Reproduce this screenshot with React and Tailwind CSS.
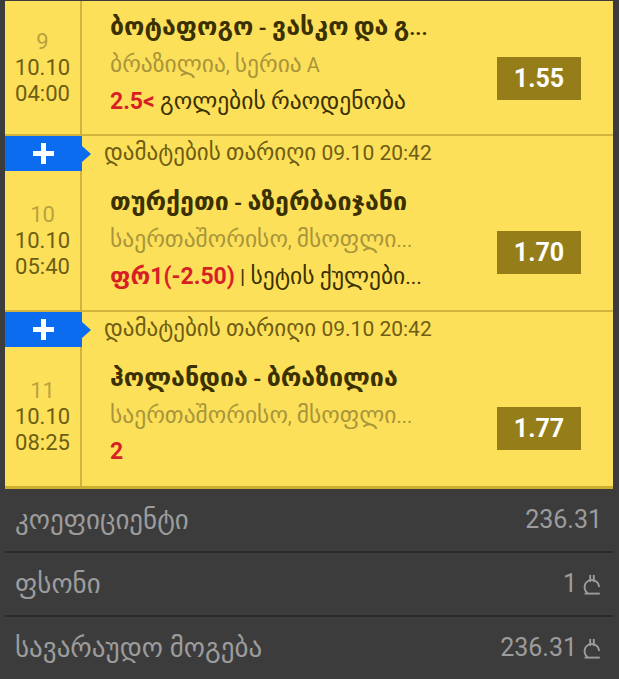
import React from "react";

const BETS = [
  {
    id: 9,
    date: "10.10",
    time: "04:00",
    title: "ბოტაფოგო - ვასკო და გ...",
    league: "ბრაზილია, სერია A",
    pick: "2.5<",
    market: "გოლების რაოდენობა",
    odd: "1.55",
  },
  {
    id: 10,
    date: "10.10",
    time: "05:40",
    title: "თურქეთი - აზერბაიჯანი",
    league: "საერთაშორისო, მსოფლი...",
    pick: "ფრ1(-2.50)",
    market: "| სეტის ქულები...",
    odd: "1.70",
    added: "09.10 20:42",
  },
  {
    id: 11,
    date: "10.10",
    time: "08:25",
    title: "ჰოლანდია - ბრაზილია",
    league: "საერთაშორისო, მსოფლი...",
    pick: "2",
    market: "",
    odd: "1.77",
    added: "09.10 20:42",
  },
];

// georgian glyphs come out of the fallback font a bit small, bump them
const Geo = ({ text, className }) =>
  text.split(/([\u10A0-\u10FF]+)/).map((part, i) =>
    /[\u10A0-\u10FF]/.test(part) ? (
      <span key={i} className={className}>
        {part}
      </span>
    ) : (
      part
    )
  );

const Lari = () => (
  <svg
    className="ml-[5px] inline-block"
    width="20"
    height="21"
    viewBox="0 0 20 21"
    fill="none"
    stroke="#9c9c9c"
    strokeWidth="1.9"
  >
    <path d="M17 13 A7.2 7.2 0 1 0 5.6 19" />
    <path d="M2.6 19.6 H17.8" />
    <path d="M8.2 1 V8 M11.8 1 V8" />
  </svg>
);

const AddedBanner = ({ added }) => (
  <div className="flex h-[37px] items-center border-t-2 border-[#d1b43c]">
    <div className="relative flex h-full w-[77px] items-center justify-center bg-[#0b6cf0]">
      <svg width="21" height="21" viewBox="0 0 21 21">
        <rect x="8" y="0" width="5" height="21" fill="#fff" />
        <rect x="0" y="8" width="21" height="5" fill="#fff" />
      </svg>
      <div className="absolute left-full top-1/2 h-0 w-0 -translate-y-1/2 border-y-[8px] border-l-[9px] border-y-transparent border-l-[#0b6cf0]" />
    </div>
    <div className="whitespace-nowrap pl-[22px] text-[21px] text-[#6e5d12]">
      <Geo text={`დამატების თარიღი ${added}`} className="text-[23px]" />
    </div>
  </div>
);

const BetCard = ({ bet, first }) => (
  <div>
    {bet.added && <AddedBanner added={bet.added} />}
    <div className={`flex ${first ? "h-[133px]" : "h-[139px]"}`}>
      <div className="flex w-[77px] flex-col items-center justify-center border-r-2 border-[#d1b43c] text-[22px] leading-[26px]">
        <span className="text-[#b9a23f]">{bet.id}</span>
        <span className="text-[#6b5d12]">{bet.date}</span>
        <span className="text-[#6b5d12]">{bet.time}</span>
      </div>
      <div
        className={`w-[340px] whitespace-nowrap pl-[28px] ${first ? "pt-[8px]" : "pt-[13px]"}`}
      >
        <div className="text-[21px] font-bold leading-[36px] text-[#3a3000]">
          <Geo text={bet.title} className="text-[25px]" />
        </div>
        <div className="text-[20px] leading-[36px] text-[#a8953a]">
          <Geo text={bet.league} className="text-[23.5px]" />
        </div>
        <div className="text-[21px] leading-[36px] text-[#3a3000]">
          <span className="text-[23px] font-bold text-[#d71f26]">
            <Geo text={bet.pick} className="text-[24px]" />
          </span>
          {bet.market && (
            <>
              {" "}
              <Geo text={bet.market} className="text-[23.5px]" />
            </>
          )}
        </div>
      </div>
      <div className={`ml-auto pr-[32px] ${first ? "pt-[56px]" : "pt-[60px]"}`}>
        <div className="flex h-[43px] w-[84px] items-center justify-center bg-[#957e1a] text-[25px] font-bold text-white">
          {bet.odd}
        </div>
      </div>
    </div>
  </div>
);

const SummaryRow = ({ label, children }) => (
  <div className="flex h-[62px] items-center justify-between whitespace-nowrap pl-[10px] pr-[11px] text-[25px] text-[#9c9c9c]">
    <span className="text-[27px]">{label}</span>
    <span className="flex items-center">{children}</span>
  </div>
);

export default function App() {
  return (
    <div className="h-[679px] w-[619px] overflow-hidden bg-[#3c3c3c] pt-px font-['Roboto','Noto_Sans','DejaVu_Sans',sans-serif]">
      <div className="ml-[5px] mr-[6px] flex flex-col">
        <div className="border-b-[3px] border-[#cdae2e] bg-[#fde05a]">
          {BETS.map((bet, i) => (
            <BetCard key={bet.id} bet={bet} first={i === 0} />
          ))}
        </div>
        <SummaryRow label="კოეფიციენტი">236.31</SummaryRow>
        <div className="h-[2px] bg-[#2b2b2b]" />
        <SummaryRow label="ფსონი">
          1<Lari />
        </SummaryRow>
        <div className="h-[2px] bg-[#2b2b2b]" />
        <SummaryRow label="სავარაუდო მოგება">
          236.31<Lari />
        </SummaryRow>
      </div>
    </div>
  );
}
